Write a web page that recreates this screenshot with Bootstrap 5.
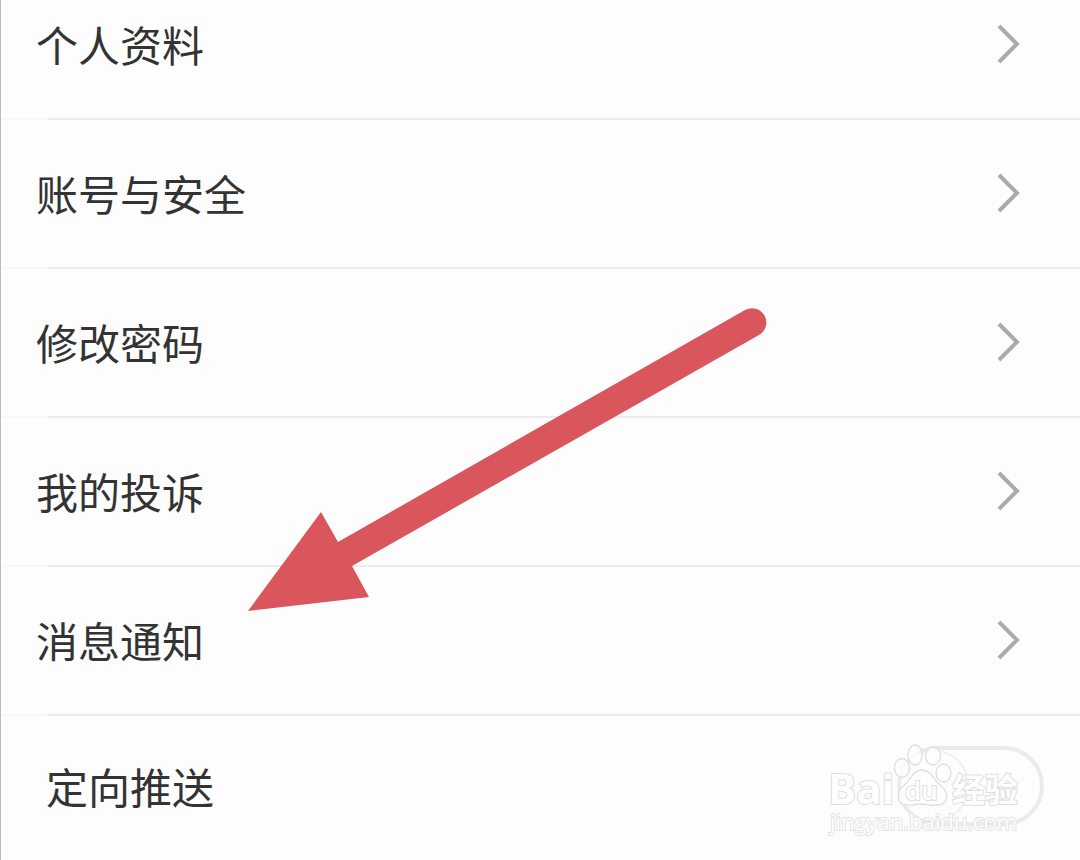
<!DOCTYPE html>
<html lang="zh-CN">
<head>
<meta charset="utf-8">
<meta name="viewport" content="width=device-width, initial-scale=1">
<title>设置</title>
<link href="https://cdn.jsdelivr.net/npm/bootstrap@5.3.0/dist/css/bootstrap.min.css" rel="stylesheet">
<style>
body { background: #fdfdfd; color: #333; font-family: "Noto Sans CJK SC", sans-serif; }
.settings { border-left: 1px solid #bdbdbd; min-height: 100vh; overflow: hidden; }
.setting-row {
  padding: 41px 60px 43px 35px;
  font-size: 42px; line-height: 63px; color: #333;
  border-bottom: 2px solid;
  border-image: linear-gradient(to right, #f8f8f8 47px, #ebeced 47px) 1;
}
.setting-row:first-child { padding-top: 12px; }
.setting-switch { padding: 29px 36px 34px 45px; border-bottom: 0; line-height: 82px; }
.switch-box.form-check-input {
  width: 147px; height: 80px; margin: 0; border: 4px solid #ebebeb; border-radius: 40px;
  background: #fdfdfd radial-gradient(circle at 32px 36px, #fdfdfd 34px, #f0f0f0 35px, #f0f0f0 36px, #fdfdfd 37px) no-repeat;
  background-size: 100% 100%; background-position: 0 0;
}
.pointer-arrow { left: 247px; top: 307px; }
.watermark { right: 46px; top: 740px; pointer-events: none; }
.watermark text { paint-order: stroke; }
</style>
</head>
<body>
<main class="settings position-relative">
  <nav>
    <a href="#profile" class="setting-row d-flex justify-content-between align-items-center text-decoration-none"><span>个人资料</span><svg width="24" height="40" viewBox="0 0 24 40" fill="none" stroke="#aaa" stroke-width="4" aria-hidden="true"><path d="M3 2L21 20L3 38"/></svg></a>
    <a href="#security" class="setting-row d-flex justify-content-between align-items-center text-decoration-none"><span>账号与安全</span><svg width="24" height="40" viewBox="0 0 24 40" fill="none" stroke="#aaa" stroke-width="4" aria-hidden="true"><path d="M3 2L21 20L3 38"/></svg></a>
    <a href="#password" class="setting-row d-flex justify-content-between align-items-center text-decoration-none"><span>修改密码</span><svg width="24" height="40" viewBox="0 0 24 40" fill="none" stroke="#aaa" stroke-width="4" aria-hidden="true"><path d="M3 2L21 20L3 38"/></svg></a>
    <a href="#complaints" class="setting-row d-flex justify-content-between align-items-center text-decoration-none"><span>我的投诉</span><svg width="24" height="40" viewBox="0 0 24 40" fill="none" stroke="#aaa" stroke-width="4" aria-hidden="true"><path d="M3 2L21 20L3 38"/></svg></a>
    <a href="#messages" class="setting-row d-flex justify-content-between align-items-center text-decoration-none"><span>消息通知</span><svg width="24" height="40" viewBox="0 0 24 40" fill="none" stroke="#aaa" stroke-width="4" aria-hidden="true"><path d="M3 2L21 20L3 38"/></svg></a>
  </nav>
  <div class="setting-row setting-switch d-flex justify-content-between align-items-center">
    <label for="push">定向推送</label>
    <input class="form-check-input switch-box" type="checkbox" role="switch" id="push">
  </div>
  <svg class="pointer-arrow position-absolute" width="520" height="306" viewBox="248 307 520 306" aria-hidden="true">
    <path fill="#d9575c" d="M248 611L321 512L338 542L745 310A14 14 0 0 1 759 335L352 566L369 597Z"/>
  </svg>
  <svg class="watermark position-absolute" width="208" height="104" viewBox="826 740 208 104" fill="#fefefe" stroke="#dedede" stroke-width="2">
    <g fill-opacity=".8" stroke-width="1.3">
      <ellipse cx="902" cy="768" rx="7.5" ry="9.5"/>
      <ellipse cx="915" cy="755" rx="7" ry="10"/>
      <ellipse cx="933" cy="756" rx="7.5" ry="9"/>
      <ellipse cx="943.500" cy="773" rx="7.5" ry="9"/>
      <path d="M922 770C932 770 934 781 941 786C950 793 948 805 937 805C928 806 927 804 920 804C912 804 909 807 902 804C897 801 897 791 902 787C911 781 912 770 922 770Z"/>
    </g>
    <text x="828" y="804" font-family="Open Sans, sans-serif" font-weight="700" font-size="42">Bai</text>
    <text x="905" y="800" font-family="Open Sans, sans-serif" font-weight="600" font-size="26">du</text>
    <text x="952" y="802" font-family="Noto Sans CJK SC, sans-serif" font-weight="700" font-size="33">经验</text>
    <text x="830" y="830" font-family="Open Sans, sans-serif" font-size="22" stroke="#e4e4e4">jingyan.baidu.com</text>
  </svg>
</main>
<script src="https://cdn.jsdelivr.net/npm/bootstrap@5.3.0/dist/js/bootstrap.bundle.min.js"></script>
</body>
</html>
